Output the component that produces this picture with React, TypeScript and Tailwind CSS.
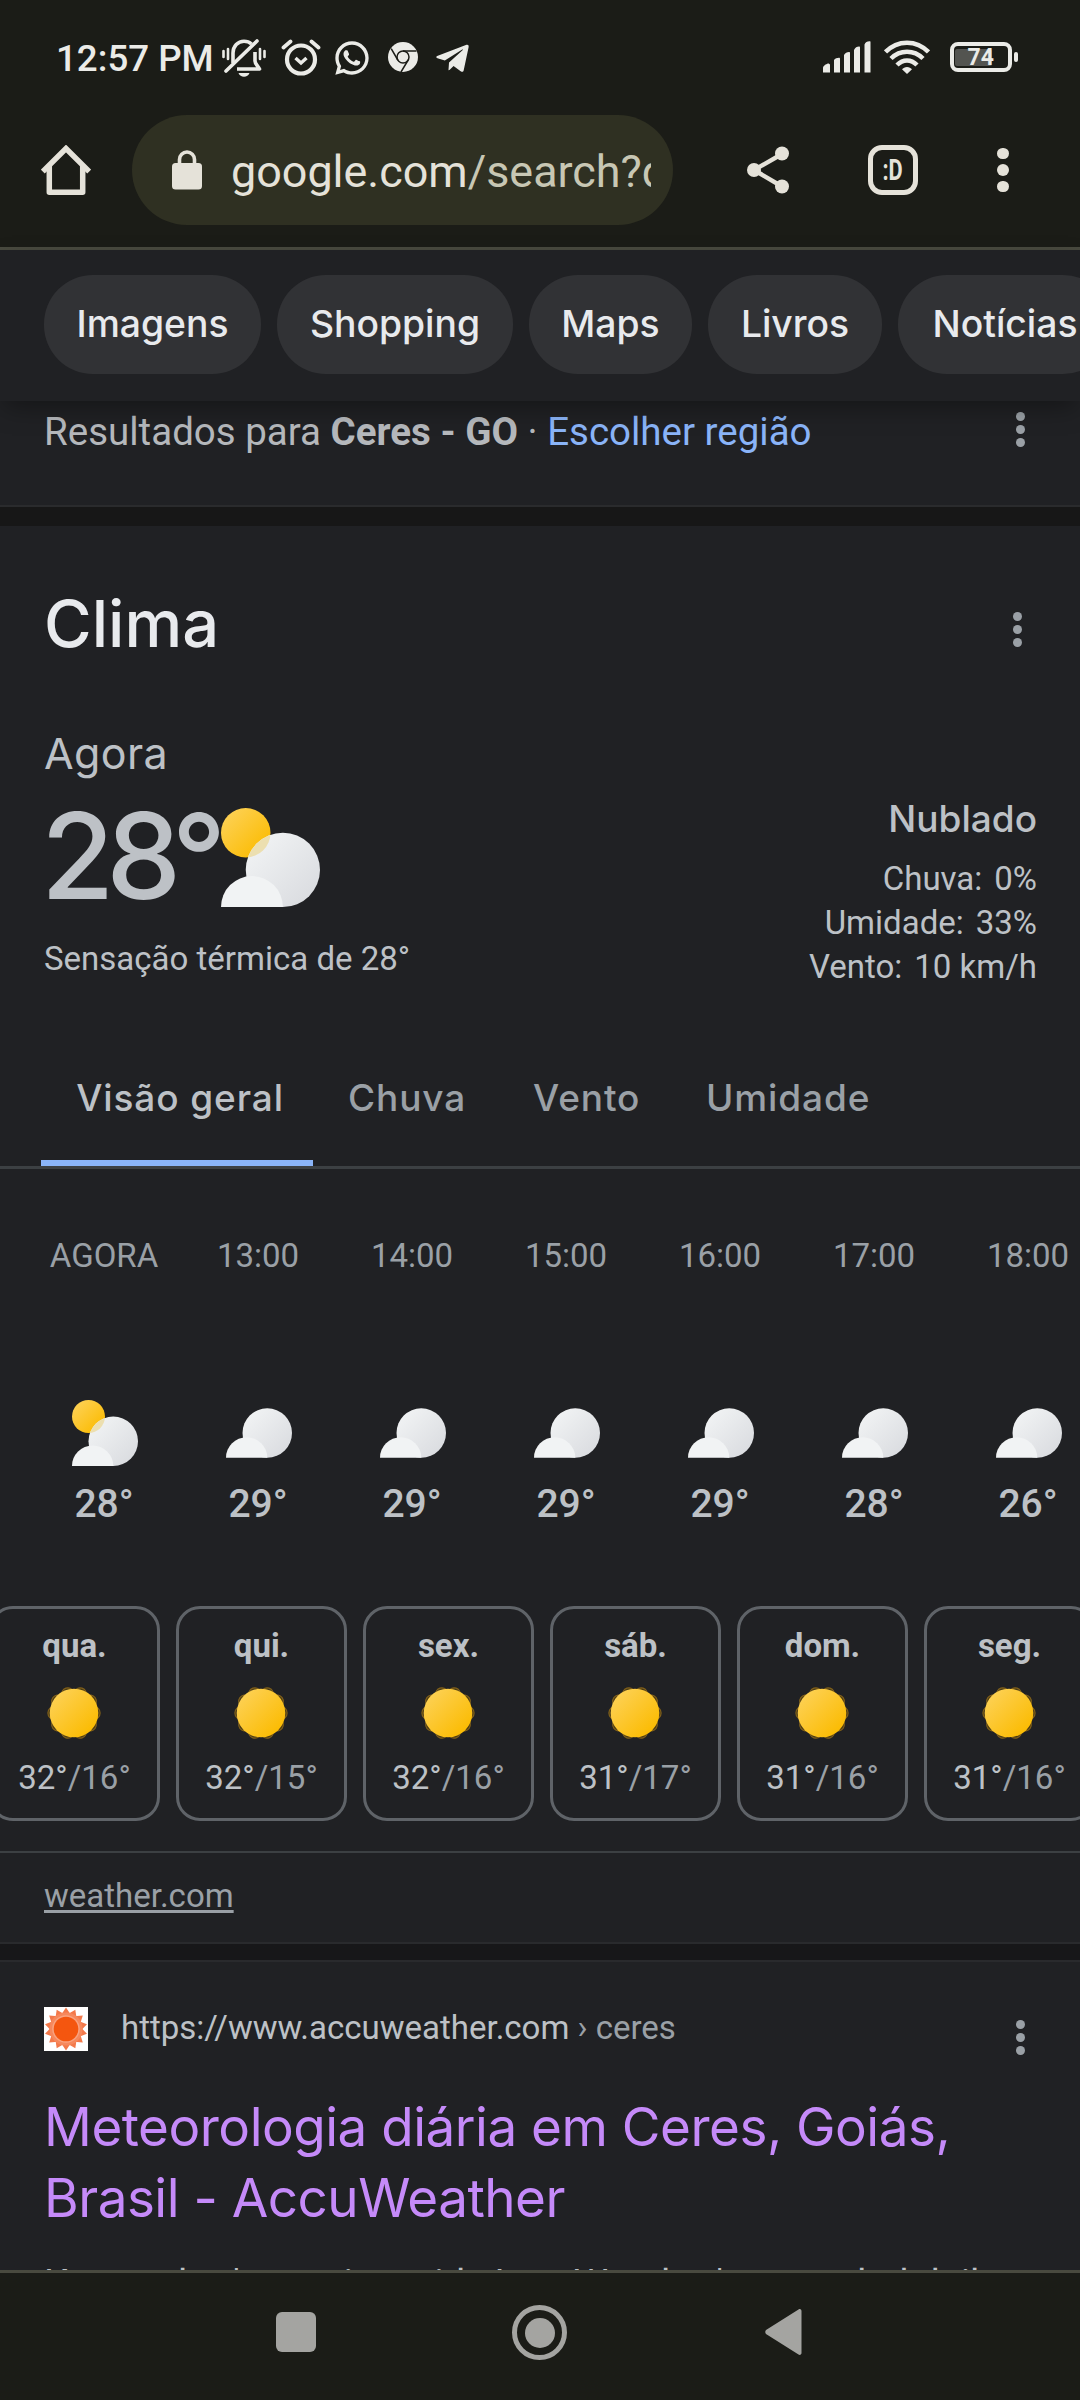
import { FaTelegramPlane } from 'react-icons/fa'
import { RiWhatsappLine } from 'react-icons/ri'

const chips = [
  { label: 'Imagens', width: 'w-[217px]' },
  { label: 'Shopping', width: 'w-[236px]' },
  { label: 'Maps', width: 'w-[163px]' },
  { label: 'Livros', width: 'w-[174px]' },
  { label: 'Notícias', width: 'w-[214px]' },
]

const details = [
  { label: 'Chuva:', value: '0%' },
  { label: 'Umidade:', value: '33%' },
  { label: 'Vento:', value: '10 km/h' },
]

const hours = [
  { time: 'AGORA', temp: '28°', sunny: true },
  { time: '13:00', temp: '29°' },
  { time: '14:00', temp: '29°' },
  { time: '15:00', temp: '29°' },
  { time: '16:00', temp: '29°' },
  { time: '17:00', temp: '28°' },
  { time: '18:00', temp: '26°' },
]

const days = [
  { day: 'qua.', max: '32°', min: '16°' },
  { day: 'qui.', max: '32°', min: '15°' },
  { day: 'sex.', max: '32°', min: '16°' },
  { day: 'sáb.', max: '31°', min: '17°' },
  { day: 'dom.', max: '31°', min: '16°' },
  { day: 'seg.', max: '31°', min: '16°' },
]

function MutedBellIcon() {
  return (
    <svg width="46" height="38" viewBox="0 0 46 38" fill="none" stroke="currentColor" strokeWidth="3.6">
      <path d="M12 24V14C12 7 17 2.200 23 2.200c3 0 5.500 1 7.500 2.800" />
      <path d="M34 13v9c0 3 3 5 4.500 8H16" strokeLinejoin="round" />
      <path d="M5 32 36 2" strokeLinecap="round" />
      <path d="M17.500 34h11c-1 2.500-3 3.800-5.500 3.800s-4.500-1.300-5.500-3.800z" fill="currentColor" stroke="none" />
      <path d="M2.500 12v6M7 10v10M39 10v10M43.500 12v6" strokeWidth="2.600" strokeLinecap="round" />
    </svg>
  )
}

function AlarmIcon() {
  return (
    <svg width="40" height="38" viewBox="0 0 40 38" fill="none" stroke="currentColor" strokeLinecap="round">
      <circle cx="20" cy="20.500" r="14" strokeWidth="4.200" />
      <path d="M14.500 19l5.500 5 5.500-5" strokeWidth="3.400" strokeLinecap="butt" />
      <path d="M2.500 8.500 9.500 2.500M37.500 8.500l-7-6" strokeWidth="3.800" />
    </svg>
  )
}

function ChromeIcon() {
  return (
    <svg width="30" height="30" viewBox="0 0 30 30">
      <circle cx="15" cy="15" r="15" fill="currentColor" />
      <g fill="none" stroke="#1b1c17" strokeWidth="1.500">
        <circle cx="15" cy="15" r="6" />
        <path d="M15 9h13.500M9.800 18 3.200 6.600M20.200 18 13 30" />
      </g>
    </svg>
  )
}

function SignalIcon() {
  return (
    <svg width="48" height="32" viewBox="0 0 48 32" fill="currentColor">
      <path d="M0 27c0-2 3-4 5-4.500 1 0 2 .5 2 1.500v7.500H0zM11 19c1-1.500 3-2.200 5-2.200.8 0 1 .5 1 1.200v13.500h-6zM21 14c1-2 3-3 5-3 .8 0 1 .5 1 1.200v19.300h-6zM31 9c1-2.500 3-3.500 5-3.500.8 0 1 .5 1 1.200v24.800h-6zM41.500 3.500C42.500 1.200 44 .3 46.500.2c1 0 1 .5 1 1v30.300h-6z" />
    </svg>
  )
}

function WifiIcon() {
  return (
    <svg width="46" height="34" viewBox="0 0 46 34" fill="none" stroke="currentColor" strokeWidth="4.500">
      <path d="M1.500 12c12-12.500 31-12.500 43 0" />
      <path d="M7 18.500c9-9 23-9 32 0" />
      <path d="M13 25c6-6 14-6 20 0" />
      <path d="M23 27c2 0 4 1 5 2.300L23 34l-5-4.700c1-1.300 3-2.300 5-2.300z" fill="currentColor" stroke="none" />
    </svg>
  )
}

function BatteryIcon() {
  return (
    <div className="flex items-center gap-[2px]">
      <div className="flex h-[30px] w-[62px] items-center rounded-[8px] border-4 border-current p-[1px]">
        <div className="flex h-[17px] w-[37px] items-center justify-end rounded-[2px] bg-[#535450]">
          <span className="-mr-[2px] text-[23px] leading-none font-bold">74</span>
        </div>
      </div>
      <div className="h-[10px] w-[4px] rounded-[2px] bg-current" />
    </div>
  )
}

function HomeIcon() {
  return (
    <svg width="50" height="50" viewBox="0 0 50 50" fill="none" stroke="currentColor" strokeWidth="5.500">
      <path d="M1.800 26.500 25 3.500l23.200 23" />
      <path d="M8.300 20v27.200h33.400V20" strokeLinejoin="round" />
    </svg>
  )
}

function LockIcon() {
  return (
    <svg width="30" height="40" viewBox="0 0 30 40">
      <rect y="13" width="30" height="26.500" rx="3.500" fill="currentColor" />
      <path d="M7.500 14V9.500a7.500 7.500 0 0 1 15 0V14" fill="none" stroke="currentColor" strokeWidth="3.600" />
    </svg>
  )
}

function ShareIcon() {
  return (
    <svg width="42" height="48" viewBox="0 0 42 48" fill="currentColor">
      <path d="M35 8 7 24l28 16.500" fill="none" stroke="currentColor" strokeWidth="4.400" />
      <circle cx="7" cy="24" r="7" />
      <circle cx="35" cy="7.500" r="7" />
      <circle cx="35" cy="40.500" r="7" />
    </svg>
  )
}

function Dots({ className }: { className?: string }) {
  return (
    <div className={`flex flex-col items-center gap-[4px] text-[#9aa0a6] ${className ?? ''}`}>
      <span className="h-[9px] w-[9px] rounded-full bg-current" />
      <span className="h-[9px] w-[9px] rounded-full bg-current" />
      <span className="h-[9px] w-[9px] rounded-full bg-current" />
    </div>
  )
}

function Gradients() {
  return (
    <svg width="0" height="0" className="absolute">
      <defs>
        <linearGradient id="sun" x1="0" y1="0" x2="1" y2="1">
          <stop offset="0.100" stopColor="#fdd155" />
          <stop offset="0.850" stopColor="#fbbc04" />
        </linearGradient>
        <linearGradient id="cloud" x1="0" y1="0" x2="1" y2="1">
          <stop offset="0.100" stopColor="#f1f3f4" />
          <stop offset="0.900" stopColor="#dadce0" />
        </linearGradient>
      </defs>
    </svg>
  )
}

function PartlyCloudyIcon({ size }: { size: number }) {
  return (
    <svg width={size} height={size} viewBox="0 0 100 100">
      <circle cx="25" cy="25" r="25" fill="url(#sun)" />
      <circle cx="62.500" cy="62.500" r="37.500" fill="url(#cloud)" />
      <clipPath id={`overlap-${size}`}>
        <circle cx="62.500" cy="62.500" r="37.500" />
      </clipPath>
      <circle cx="25" cy="25" r="25" fill="#ecdfb0" clipPath={`url(#overlap-${size})`} />
      <path d="M0 100a31 31 0 0 1 62.500 0z" fill="#f1f3f4" />
    </svg>
  )
}

function CloudIcon() {
  return (
    <svg width="66" height="50" viewBox="0 0 100 75">
      <circle cx="62.500" cy="37.500" r="37.500" fill="url(#cloud)" />
      <path d="M0 75a31 31 0 0 1 62.500 0z" fill="#f1f3f4" />
    </svg>
  )
}

function SunIcon() {
  return (
    <svg width="54" height="54" viewBox="-27 -27 54 54">
      {Array.from({ length: 10 }, (_, i) => (
        <circle key={i} cx="19.800" r="6.300" fill="#4a3a14" stroke="#80601a" strokeWidth="1.200" transform={`rotate(${i * 36})`} />
      ))}
      <circle r="24.300" fill="url(#sun)" />
    </svg>
  )
}

function AccuWeatherIcon() {
  return (
    <svg width="44" height="44" viewBox="-22 -22 44 44" className="bg-white">
      {Array.from({ length: 14 }, (_, i) => (
        <path key={i} d="M-5-14 0-21.500 5-14z" fill="#f3794a" transform={`rotate(${i * (360 / 14)})`} />
      ))}
      <circle r="16.500" fill="#f6885c" />
      <circle r="13.800" fill="#f9a27f" />
      <circle r="12.300" fill="#f4560f" />
    </svg>
  )
}

function StatusBar() {
  return (
    <div className="flex h-[115px] items-start pl-[56px] pt-[39px] text-[#ebebe7]">
      <span className="w-[165px] text-[36.700px] leading-[40px] font-medium whitespace-nowrap">12:57 PM</span>
      <MutedBellIcon />
      <div className="ml-[14px]"><AlarmIcon /></div>
      <RiWhatsappLine className="ml-[11px] h-[40px] w-[40px] -mt-[1px]" />
      <div className="ml-[16px] mt-[3px]"><ChromeIcon /></div>
      <FaTelegramPlane className="ml-[16px] mt-[1px] h-[37px] w-[37px]" />
      <div className="ml-auto mr-[62px] mt-[1px] flex items-center">
        <SignalIcon />
        <div className="ml-[13px]"><WifiIcon /></div>
        <div className="ml-[20px]"><BatteryIcon /></div>
      </div>
    </div>
  )
}

function Toolbar() {
  return (
    <div className="flex h-[110px] items-center pl-[41px] text-[#e5e2d9]">
      <HomeIcon />
      <div className="ml-[41px] flex h-[110px] w-[541px] items-center rounded-full bg-[#2f3022] pl-[40px] pr-[22px]">
        <LockIcon />
        <span className="ml-[29px] mt-[3px] w-[420px] overflow-hidden text-[44.900px] leading-[60px] whitespace-nowrap">
          google.com<span className="text-[#c8c7b4]">/search?q</span>
        </span>
      </div>
      <div className="ml-[74px]"><ShareIcon /></div>
      <div className="ml-[79px] flex h-[50px] w-[50px] items-center justify-center rounded-[14px] border-[5.500px] border-current">
        <span className="scale-x-75 text-[29px] leading-none font-bold">:D</span>
      </div>
      <div className="ml-[79px] flex flex-col gap-[5px]">
        <span className="h-[11.500px] w-[11.500px] rounded-full bg-current" />
        <span className="h-[11.500px] w-[11.500px] rounded-full bg-current" />
        <span className="h-[11.500px] w-[11.500px] rounded-full bg-current" />
      </div>
    </div>
  )
}

function CurrentWeather() {
  return (
    <div className="flex h-[322px] shrink-0 justify-between pl-[44px] pr-[43px]">
      <div>
        <div className="h-[62px] font-[Inter] text-[43px] leading-[56px] tracking-[0.400px] text-[#bdc1c6]">Agora</div>
        <div className="flex h-[110px] items-start">
          <span className="-ml-[3px] mt-[10px] w-[180px] font-[Inter] text-[119px] leading-[118px] font-medium tracking-[-8px] text-[#bdc1c6]">28°</span>
          <div className="mt-[21px]"><PartlyCloudyIcon size={99} /></div>
        </div>
        <div className="mt-[40px] text-[33px] leading-[44px] text-[#bdc1c6]">Sensação térmica de 28°</div>
      </div>
      <div className="pt-[71px] text-right text-[#bdc1c6]">
        <div className="mb-[15px] font-[Inter] text-[37px] leading-[46px] font-medium">Nublado</div>
        {details.map((d) => (
          <div key={d.label} className="flex justify-end gap-[12px] text-[33px] leading-[44px]">
            <span>{d.label}</span>
            <span>{d.value}</span>
          </div>
        ))}
      </div>
    </div>
  )
}

export default function App() {
  return (
    <div className="flex h-[2400px] w-[1080px] flex-col overflow-hidden bg-[#202124] font-[Roboto,sans-serif]">
      <Gradients />
      <div className="h-[250px] shrink-0 border-b-[3px] border-[#494a3f] bg-[#1b1c17]">
        <StatusBar />
        <Toolbar />
      </div>

      {/* Filters */}
      <div className="relative z-10 flex h-[151px] shrink-0 gap-[16px] bg-[#202124] pl-[44px] pt-[25px] shadow-[0_10px_24px_-4px_rgba(0,0,0,0.35)]">
        {chips.map((c) => (
          <div key={c.label} className={`flex h-[99px] shrink-0 items-center justify-center rounded-[49px] bg-[#313235] pb-[2px] font-[Inter] text-[37.300px] font-medium text-[#e8eaed] ${c.width}`}>
            {c.label}
          </div>
        ))}
      </div>

      {/* Region */}
      <div className="flex h-[106px] shrink-0 items-start border-b-2 border-[#2a2b2d] pl-[44px] pr-[55px] pt-[6px]">
        <div className="flex-1 text-[38.500px] leading-[50px] text-[#b5b8bc]">
          Resultados para <b>Ceres - GO</b> · <span className="text-[#8ab4f8]">Escolher região</span>
        </div>
        <Dots className="mt-[5px]" />
      </div>
      <div className="h-[19px] shrink-0 bg-[#171717]" />

      {/* Weather */}
      <div className="flex h-[199px] shrink-0 items-start justify-between pl-[44px] pr-[58px] pt-[60px]">
        <h1 className="font-[Inter] text-[65px] leading-[76px] font-medium text-[#e8eaed]">Clima</h1>
        <Dots className="mt-[26px]" />
      </div>
      <CurrentWeather />
      <div className="flex h-[122px] shrink-0 border-b-[3px] border-[#3c4043] pl-[41px] font-[Inter] text-[37px] leading-[46px] font-medium tracking-[0.900px] text-[#9aa0a6]">
        <div className="flex h-[119px] w-[272px] justify-center border-b-[6px] border-[#8ab4f8] pl-[6px] pt-[28px] text-[#bdc1c6]">Visão geral</div>
        <div className="ml-[35px] flex pt-[28px]">
          <span className="w-[185px]">Chuva</span>
          <span className="w-[173px]">Vento</span>
          <span>Umidade</span>
        </div>
      </div>

      {/* Hourly */}
      <div className="flex h-[437px] shrink-0 pl-[27px] pt-[64px]">
        {hours.map((h) => (
          <div key={h.time} className="flex w-[154px] shrink-0 flex-col items-center">
            <span className="text-[33px] leading-[46px] text-[#9aa0a6]">{h.time}</span>
            <div className="mt-[120px] flex h-[68px] items-center pl-[2px]">
              {h.sunny ? <PartlyCloudyIcon size={66} /> : <CloudIcon />}
            </div>
            <span className="mt-[12px] text-[39px] leading-[50px] font-medium text-[#bdc1c6]">{h.temp}</span>
          </div>
        ))}
      </div>

      {/* Daily */}
      <div className="-ml-[11px] flex h-[245px] shrink-0 gap-4">
        {days.map((d) => (
          <div key={d.day} className="flex h-[215px] w-[171px] shrink-0 flex-col items-center rounded-[24px] border-[3px] border-[#5f6368] pt-[15px]">
            <span className="text-[33px] leading-[44px] font-bold text-[#bdc1c6]">{d.day}</span>
            <div className="mt-[18px] mr-[1px]"><SunIcon /></div>
            <span className="mt-[16px] text-[33px] leading-[44px] text-[#bdc1c6]">
              {d.max}<span className="text-[#9aa0a6]">/{d.min}</span>
            </span>
          </div>
        ))}
      </div>

      <div className="h-[93px] shrink-0 border-y-2 border-[#3c4043] border-b-[#292a2d] pl-[44px] pt-[21px]">
        <span className="text-[33px] leading-[44px] text-[#9aa0a6] underline decoration-[3px] underline-offset-[3px]">weather.com</span>
      </div>
      <div className="h-[18px] shrink-0 border-b-2 border-[#292a2d] bg-[#171719]" />

      {/* Search result */}
      <div className="h-[308px] shrink-0 overflow-hidden pl-[44px] pr-[55px] pt-[45px]">
        <div className="flex h-[85px] items-start">
          <AccuWeatherIcon />
          <div className="-mt-[1px] ml-[33px] flex-1 text-[33px] leading-[44px] text-[#bdc1c6]">
            https://www.accuweather.com<span className="text-[#9aa0a6]"> › ceres</span>
          </div>
          <Dots className="mt-[13px]" />
        </div>
        <div className="w-[985px] font-[Inter] text-[53px] leading-[71px] tracking-[-0.500px] whitespace-nowrap text-[#c58af9]">
          Meteorologia diária em Ceres, Goiás,
          <br />
          Brasil - AccuWeather
        </div>
        <div className="mt-[25px] text-[38.500px] leading-[50px] whitespace-nowrap text-[#bdc1c6]">
          Know what's coming with AccuWeather's extended daily
        </div>
      </div>

      {/* System navigation */}
      <div className="flex h-[130px] shrink-0 items-start border-t-[3px] border-[#494a3f] bg-[#1b1c17] pl-[276px] pt-[32px] text-[#a4a4a1]">
        <div className="mt-[7px] h-[40px] w-[40px] rounded-[6px] bg-current" />
        <div className="ml-[196px] flex h-[55px] w-[55px] items-center justify-center rounded-full border-[5px] border-current">
          <div className="h-[30px] w-[30px] rounded-full bg-current" />
        </div>
        <svg className="ml-[198px] mt-[4px]" width="37" height="46" viewBox="0 0 37 46" fill="currentColor">
          <path d="M33.500.5c1.500-1 3 0 3 1.500v42c0 1.500-1.500 2.500-3 1.500L1 25c-1-1-1-3 0-4z" />
        </svg>
      </div>
    </div>
  )
}
